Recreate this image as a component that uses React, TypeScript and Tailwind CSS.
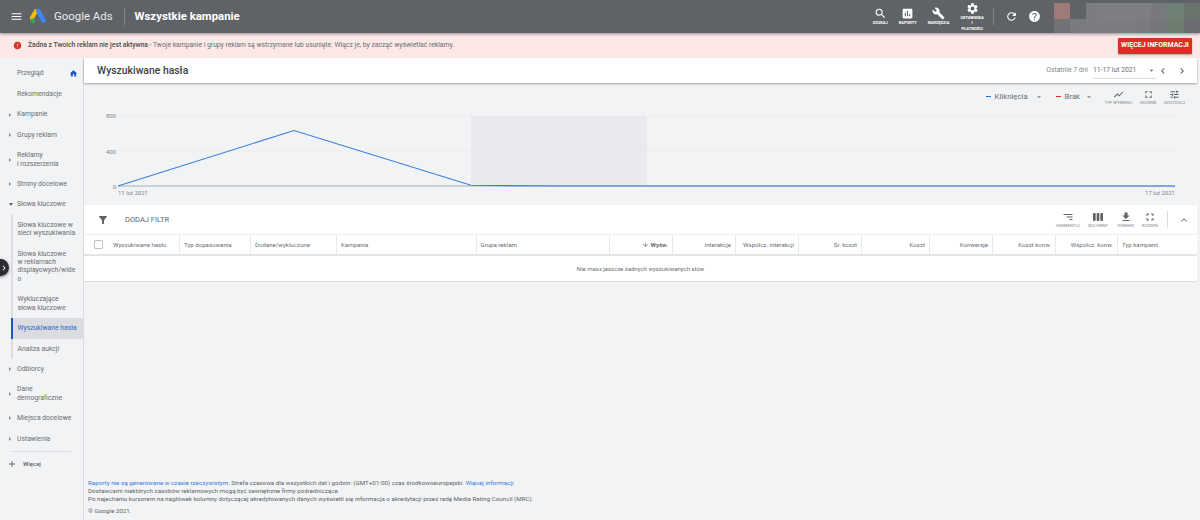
import {
  MdAdd,
  MdArrowDownward,
  MdArrowDropDown,
  MdAssessment,
  MdBuild,
  MdChevronLeft,
  MdChevronRight,
  MdError,
  MdExpandLess,
  MdFileDownload,
  MdFilterAlt,
  MdFullscreen,
  MdHelp,
  MdHome,
  MdMenu,
  MdRefresh,
  MdSearch,
  MdSettings,
  MdShowChart,
  MdSort,
  MdTune,
  MdViewWeek,
} from "react-icons/md";

const FONT = "font-['Roboto','Liberation_Sans',sans-serif]";

const COLUMNS = [
  { label: "Wyszukiwane hasło", align: "left" },
  { label: "Typ dopasowania", align: "left" },
  { label: "Dodane/wykluczone", align: "left" },
  { label: "Kampania", align: "left" },
  { label: "Grupa reklam", align: "left" },
  { label: "Wyśw.", align: "right" },
  { label: "Interakcje", align: "right" },
  { label: "Współcz. interakcji", align: "right" },
  { label: "Śr. koszt", align: "right" },
  { label: "Koszt", align: "right" },
  { label: "Konwersje", align: "right" },
  { label: "Koszt konw.", align: "right" },
  { label: "Współcz. konw.", align: "right" },
  { label: "Typ kampanii", align: "left" },
];

// blurred account block in the header
const MOSAIC = [
  "#a07a78", "#5f6368", "#7b7d81", "#7d7f83", "#7d7f83", "#7c7e82", "#77797d", "#6f8074", "#68746c",
  "#707276", "#797b7f", "#7b7d81", "#7b7d81", "#7b7d81", "#797b7f", "#74767a", "#6c7c6e", "#696c70",
];

function NavRow({ label, caret, open }: { label: React.ReactNode; caret?: boolean; open?: boolean }) {
  return (
    <div className="flex items-center py-[6px] pl-[9px] pr-1">
      <span className="w-2 shrink-0 flex items-center">
        {caret &&
          (open ? (
            <span className="w-0 h-0 border-x-[2px] border-x-transparent border-t-[3px] border-t-[#5f6368]" />
          ) : (
            <span className="w-0 h-0 border-y-[2px] border-y-transparent border-l-[2px] border-l-[#80868b]" />
          ))}
      </span>
      <span className="text-[6.8px] leading-[8.4px] text-[#6a6e73] whitespace-nowrap">{label}</span>
    </div>
  );
}

function SubRow({ label, active }: { label: React.ReactNode; active?: boolean }) {
  return (
    <div
      className={`py-[6px] pl-[4.5px] text-[6.8px] leading-[8.4px] whitespace-nowrap border-l-2 ${
        active ? "bg-[#dadce0] text-[#3367c4] border-[#1a56c4]" : "text-[#6a6e73] border-[#dadce0]"
      }`}
    >
      {label}
    </div>
  );
}

function Sidebar() {
  return (
    <aside className="w-[84px] shrink-0 border-r border-[#dadce0] bg-[#f1f3f4] pt-[5px] relative">
      <div className="flex items-center justify-between py-[6px] pl-[17px] pr-[5px] text-[6.8px] leading-[8.4px] text-[#6a6e73]">
        Przegląd
        <MdHome className="text-[9px] text-[#1a56c4]" />
      </div>
      <div className="py-[6px] pl-[17px] text-[6.8px] leading-[8.4px] text-[#6a6e73]">Rekomendacje</div>
      <NavRow label="Kampanie" caret />
      <NavRow label="Grupy reklam" caret />
      <NavRow
        label={
          <>
            Reklamy
            <br />i rozszerzenia
          </>
        }
        caret
      />
      <NavRow label="Strony docelowe" caret />
      <NavRow label="Słowa kluczowe" caret open />
      <div className="ml-[11px]">
        <SubRow
          label={
            <>
              Słowa kluczowe w
              <br />
              sieci wyszukiwania
            </>
          }
        />
        <SubRow
          label={
            <>
              Słowa kluczowe
              <br />w reklamach
              <br />
              displayowych/wide
              <br />o
            </>
          }
        />
        <SubRow
          label={
            <>
              Wykluczające
              <br />
              słowa kluczowe
            </>
          }
        />
        <SubRow label="Wyszukiwane hasła" active />
        <SubRow label="Analiza aukcji" />
      </div>
      <NavRow label="Odbiorcy" caret />
      <NavRow
        label={
          <>
            Dane
            <br />
            demograficzne
          </>
        }
        caret
      />
      <NavRow label="Miejsca docelowe" caret />
      <NavRow label="Ustawienia" caret />
      <div className="mx-[12px] mt-[2px] border-t border-[#dadce0]" />
      <div className="flex items-center gap-[6px] pl-[7px] pt-[7px]">
        <MdAdd className="text-[10px] text-[#5f6368]" />
        <span className="text-[6px] font-medium text-[#5f6368]">Więcej</span>
      </div>
      {/* collapse handle */}
      <div className="absolute left-[-8px] top-[201px] w-[17px] h-[17px] rounded-full bg-[#2b2d30] shadow-[0_1px_3px_rgba(0,0,0,0.5)] flex items-center justify-end text-white">
        <MdChevronRight className="text-[10px]" />
      </div>
    </aside>
  );
}

function HeaderAction({ icon, label }: { icon: React.ReactNode; label: React.ReactNode }) {
  return (
    <div className="flex flex-col items-center text-white">
      {icon}
      <span className="text-[4px] leading-[5.5px] font-bold text-center">{label}</span>
    </div>
  );
}

function Header() {
  return (
    <header className="h-[33px] shrink-0 bg-[#5f6368] flex items-center text-white shadow-[0_1px_3px_rgba(0,0,0,0.4)] relative z-10">
      <MdMenu className="ml-[10px] text-[13px]" />
      <svg viewBox="0 0 20 18" className="ml-[7px] w-[17px] h-[15px]">
        <path d="M7.5 1.5 L2 11" stroke="#fbbc04" strokeWidth="5" strokeLinecap="round" />
        <path d="M9.5 2 L16 14" stroke="#4285f4" strokeWidth="5.4" strokeLinecap="round" />
        <circle cx="3.2" cy="14" r="2.8" fill="#34a853" />
      </svg>
      <span className="ml-[7px] text-[11.4px] text-[#e8eaed]">Google Ads</span>
      <span className="ml-[11px] h-[17px] border-l border-[#80868b]" />
      <span className="ml-[10px] text-[11.4px] font-bold">Wszystkie kampanie</span>
      <div className="ml-auto flex items-center">
        <div className="flex items-center gap-[11px]">
          <HeaderAction icon={<MdSearch className="text-[13px]" />} label="SZUKAJ" />
          <HeaderAction icon={<MdAssessment className="text-[13px]" />} label="RAPORTY" />
          <HeaderAction icon={<MdBuild className="text-[13px]" />} label="NARZĘDZIA" />
          <HeaderAction
            icon={<MdSettings className="text-[13px]" />}
            label={
              <>
                USTAWIENIA
                <br />I
                <br />
                PŁATNOŚCI
              </>
            }
          />
        </div>
        <span className="ml-[9px] h-[17px] border-l border-[#80868b]" />
        <MdRefresh className="ml-[11px] text-[13px]" />
        <MdHelp className="ml-[10px] text-[13px]" />
        <div className="ml-[13px] mt-[3px] grid grid-cols-[repeat(9,16.2px)] grid-rows-[16px_14px] w-[146px] h-[30px]">
          {MOSAIC.map((c, i) => (
            <span key={i} className="block" style={{ background: c }} />
          ))}
        </div>
      </div>
    </header>
  );
}

function Banner() {
  return (
    <div className="h-[25px] shrink-0 bg-[#fce8e6] flex items-center pl-[13px] pr-[8px]">
      <MdError className="text-[9px] text-[#d93025]" />
      <span className="ml-[6px] text-[6.75px] text-[#6a6e73]">
        <span className="font-medium text-[#4a4d51]">Żadna z Twoich reklam nie jest aktywna</span> - Twoje kampanie i
        grupy reklam są wstrzymane lub usunięte. Włącz je, by zacząć wyświetlać reklamy.
      </span>
      <div className="ml-auto h-[16px] w-[74px] flex items-center justify-center rounded-[1px] bg-[#d93025] text-white text-[7px] font-bold shadow-[0_1px_2px_rgba(0,0,0,0.3)]">
        WIĘCEJ INFORMACJI
      </div>
    </div>
  );
}

function TitleBar() {
  return (
    <div className="h-[25px] mr-[3px] bg-white flex items-center shadow-[0_1px_2px_rgba(0,0,0,0.35)] relative">
      <h1 className="ml-[13px] text-[10.4px] font-medium text-[#3c4043]">Wyszukiwane hasła</h1>
      <div className="ml-auto flex items-center pr-[9px] text-[6.8px] text-[#80868b]">
        Ostatnie 7 dni
        <span className="ml-[5px] w-[63px] h-[17px] flex items-center justify-between border-b border-[#dadce0] text-[#6a6e73]">
          11-17 lut 2021
          <MdArrowDropDown className="text-[9px]" />
        </span>
        <MdChevronLeft className="ml-[1px] text-[12px] text-[#5f6368]" />
        <MdChevronRight className="ml-[7px] text-[12px] text-[#5f6368]" />
      </div>
    </div>
  );
}

function LegendPill({ color, label, width }: { color: string; label: string; width: string }) {
  return (
    <div className={`flex items-center ${width} text-[7.8px] text-[#6a6e73]`}>
      <span className={`w-[5px] h-[1.5px] ${color}`} />
      <span className="ml-[4px]">{label}</span>
      <MdArrowDropDown className="ml-auto text-[10px] text-[#80868b]" />
    </div>
  );
}

function ChartTool({ icon, label }: { icon: React.ReactNode; label: string }) {
  return (
    <div className="flex flex-col items-center text-[#5f6368]">
      {icon}
      <span className="text-[4.2px] leading-[5px] text-[#80868b]">{label}</span>
    </div>
  );
}

function Chart() {
  return (
    <div className="h-[122px] shrink-0">
      <div className="h-[27px] flex items-center justify-end pr-[15px]">
        <LegendPill color="bg-[#1a73e8]" label="Kliknięcia" width="w-[58px]" />
        <LegendPill color="bg-[#d93025]" label="Brak" width="w-[38px] ml-[12px]" />
        <div className="ml-[11px] flex items-center gap-[8px]">
          <ChartTool icon={<MdShowChart className="text-[11px]" />} label="TYP WYKRESU" />
          <ChartTool icon={<MdFullscreen className="text-[11px]" />} label="ROZWIŃ" />
          <ChartTool icon={<MdTune className="text-[11px]" />} label="DOSTOSUJ" />
        </div>
      </div>
      <svg viewBox="0 0 1116 95" className="w-[1116px] h-[95px]">
        <rect x="387" y="6" width="176" height="70" fill="#e8eaed" />
        <line x1="34" y1="6" x2="1091" y2="6" stroke="#e8eaed" strokeWidth="0.7" />
        <line x1="34" y1="41" x2="1091" y2="41" stroke="#e8eaed" strokeWidth="0.7" />
        <line x1="34" y1="76" x2="1091" y2="76" stroke="#9aa0a6" strokeWidth="0.8" />
        <polyline
          points="34,76 210,20.5 387,75.3 480,76 1091,76"
          fill="none"
          stroke="#3b7ddd"
          strokeWidth="1.1"
        />
        <g fontSize="6" fill="#80868b" fontFamily="Roboto, sans-serif">
          <text x="32" y="8" textAnchor="end">800</text>
          <text x="32" y="43.5" textAnchor="end">400</text>
          <text x="32" y="78.5" textAnchor="end">0</text>
          <text x="34" y="84.5">11 lut 2021</text>
          <text x="1091" y="84.5" textAnchor="end">17 lut 2021</text>
        </g>
      </svg>
    </div>
  );
}

function TableTool({ icon, label, width }: { icon: React.ReactNode; label: string; width: string }) {
  return (
    <div className={`${width} flex flex-col items-center text-[#5f6368]`}>
      {icon}
      <span className="text-[4.2px] leading-[5px] text-[#80868b]">{label}</span>
    </div>
  );
}

function TableCard() {
  return (
    <div className="mr-[3px] bg-white border-b border-[#dadce0]">
      <div className="h-[29px] flex items-center">
        <MdFilterAlt className="ml-[13px] text-[12px] text-[#5f6368]" />
        <span className="ml-[16px] text-[7.5px] text-[#5f6368]">DODAJ FILTR</span>
        <div className="ml-auto flex items-center">
          <TableTool width="w-[32px]" icon={<MdSort className="text-[12px] scale-x-[-1]" />} label="SEGMENTUJ" />
          <TableTool width="w-[28px]" icon={<MdViewWeek className="text-[12px]" />} label="KOLUMNY" />
          <TableTool width="w-[28px]" icon={<MdFileDownload className="text-[12px]" />} label="POBIERZ" />
          <TableTool width="w-[20px]" icon={<MdFullscreen className="text-[12px]" />} label="ROZWIŃ" />
          <span className="ml-[7px] h-[17px] border-l border-[#dadce0]" />
          <MdExpandLess className="ml-[10px] mr-[7px] text-[12px] text-[#80868b]" />
        </div>
      </div>
      <div className="h-[22px] border-t border-[#eceef0] border-b-2 border-b-[#e3e5e8] grid grid-cols-[96px_71px_86px_139.5px_133.5px_63px_63px_63px_63px_68px_63px_63px_62px_79px]">
        {COLUMNS.map((col, i) => (
          <div
            key={col.label}
            className={`flex items-center gap-[2px] border-r border-[#e8eaed] px-[4px] text-[6.1px] text-[#6a6e73] last:border-r-0 ${
              col.align === "right" ? "justify-end" : ""
            }`}
          >
            {i === 0 && (
              <span className="ml-[6px] mr-[8px] w-[9px] h-[9px] rounded-[1px] border border-[#bdc1c6] shrink-0" />
            )}
            {i === 5 && <MdArrowDownward className="text-[7px]" />}
            <span className={`whitespace-nowrap ${i === 5 ? "font-bold" : ""}`}>{col.label}</span>
          </div>
        ))}
      </div>
      <div className="h-[25px] flex items-center justify-center text-[6px] text-[#6a6e73]">
        Nie masz jeszcze żadnych wyszukiwanych słów
      </div>
    </div>
  );
}

function Footer() {
  return (
    <footer className="mt-auto pl-[4px] pb-[5px] text-[6.25px] leading-[8px] text-[#5f6368]">
      <div>
        <span className="text-[#3b7ddd]">Raporty nie są generowane w czasie rzeczywistym.</span> Strefa czasowa dla
        wszystkich dat i godzin: (GMT+01:00) czas środkowoeuropejski.{" "}
        <span className="text-[#3b7ddd]">Więcej informacji</span>
      </div>
      <div>Dostawcami niektórych zasobów reklamowych mogą być zewnętrzne firmy pośredniczące.</div>
      <div>
        Po najechaniu kursorem na nagłówek kolumny dotyczącej akredytowanych danych wyświetli się informacja o
        akredytacji przez radę Media Rating Council (MRC).
      </div>
      <div className="mt-[4px]">© Google 2021.</div>
    </footer>
  );
}

export default function App() {
  return (
    <div className={`${FONT} w-[1200px] h-[520px] overflow-hidden flex flex-col bg-[#f1f3f4]`}>
      <Header />
      <Banner />
      <div className="flex-1 flex min-h-0">
        <Sidebar />
        <main className="flex-1 flex flex-col min-w-0">
          <TitleBar />
          <Chart />
          <TableCard />
          <Footer />
        </main>
      </div>
    </div>
  );
}
